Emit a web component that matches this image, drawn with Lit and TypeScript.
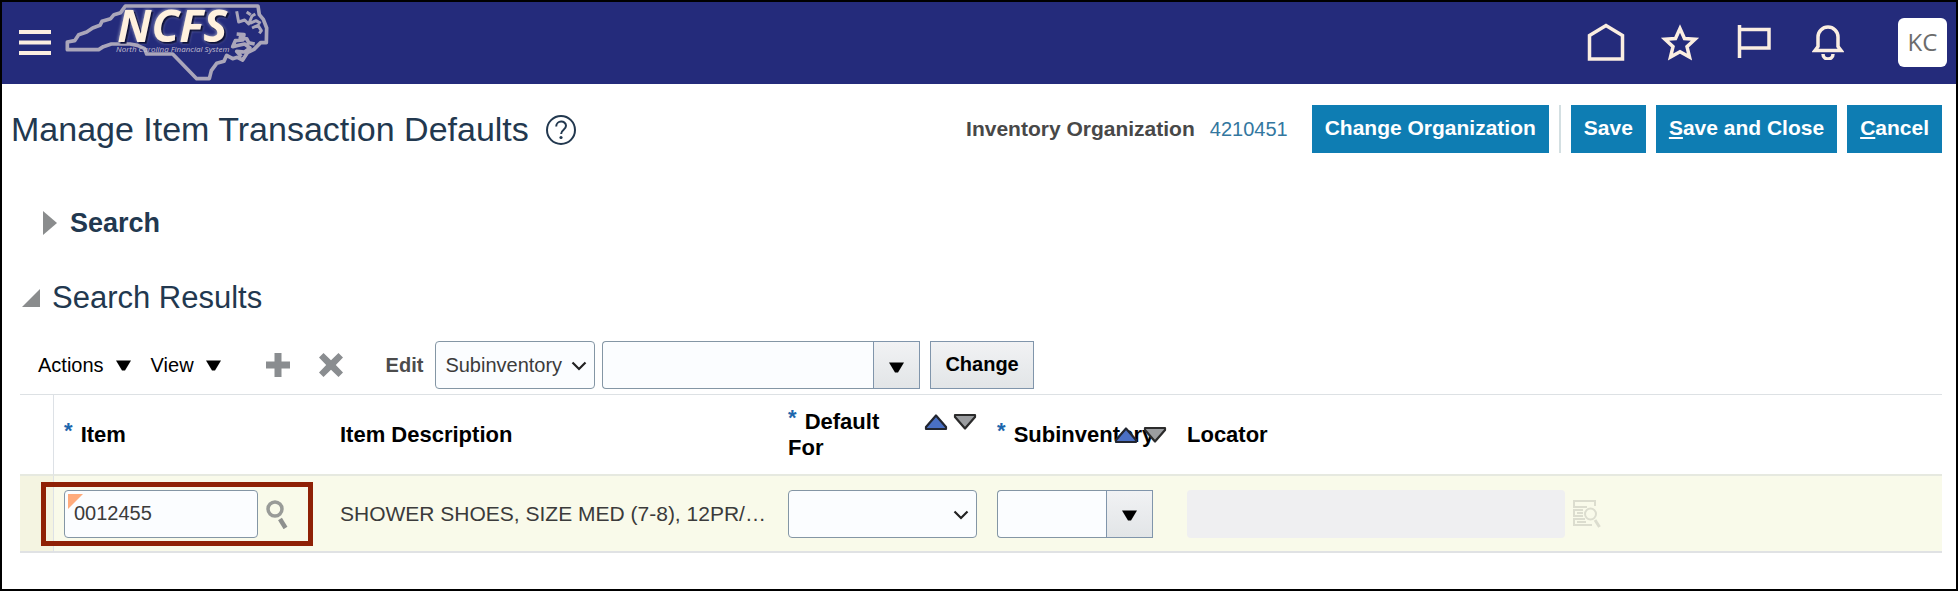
import { LitElement, html, css, svg } from "lit";
import { customElement } from "lit/decorators.js";

const chevron = html`<svg class="chevron" width="16" height="10" viewBox="0 0 16 10" aria-hidden="true">
  <path d="M1.5 1.5 8 8l6.500-6.500" fill="none" stroke="#222" stroke-width="2.200" />
</svg>`;

const downTriangle = html`<svg width="15" height="11" viewBox="0 0 15 11" aria-hidden="true">
  <path d="M0 .5h15L9 10.500H6z" fill="#000" />
</svg>`;

const sortIcons = html`<span class="sort">
  <button class="plain" aria-label="Sort ascending">
    <svg width="24" height="18" viewBox="0 0 24 18">
      <path d="M12 2.500 22 14v2H2v-2z" fill="#4a70c4" stroke="#222630" stroke-width="2.200" stroke-linejoin="round" />
    </svg>
  </button>
  <button class="plain" aria-label="Sort descending">
    <svg width="24" height="18" viewBox="0 0 24 18">
      <path d="M2 2h20v2L12 15.500 2 4z" fill="#9b9da0" stroke="#2b2b2b" stroke-width="2.200" stroke-linejoin="round" />
    </svg>
  </button>
</span>`;

const coastline = svg`
  <g fill="none" stroke="#aaa6ba" stroke-width="11" stroke-linejoin="round">
    <path d="M226 18H624L628 44 640 58 650 84 649 128H632L612 148 592 158 578 180 562 172 548 176 530 166 522 184 500 190 484 212 478 236H440L368 162H290L284 146 262 136 240 132H184L160 140 146 149H52V126L74 122 86 104 110 96 128 84 150 76 156 64 182 56 192 44 212 38Z" />
    <path stroke-width="9" d="M560 34 566 66 584 60 596 72 606 48 616 42M590 36 602 44M606 84 624 76 634 92 628 100M600 70 618 62 632 70" />
    <path stroke-width="11" d="M560 102 582 104 578 120 556 122 548 140 566 136 584 132 600 144 584 156 560 154 574 170M566 110 590 116 596 128 614 132" />
  </g>`;

@customElement("app-root")
export class AppRoot extends LitElement {
  static styles = css`
    :host {
      display: block;
      box-sizing: border-box;
      min-height: 100vh;
      border: 2px solid #000;
      background: #fff;
      color: #000;
      font: 20px/26px "Liberation Sans", Arial, sans-serif;
    }
    * { box-sizing: border-box; }
    svg { display: block; flex: none; }
    h1, h2 { margin: 0; }
    button, input, select { font: inherit; color: inherit; margin: 0; }
    button { cursor: pointer; }
    .plain {
      display: flex;
      align-items: center;
      justify-content: center;
      padding: 0;
      border: 0;
      background: none;
    }
    .top {
      display: flex;
      align-items: center;
      height: 82px;
      padding: 0 9px 0 17px;
      background: #242b7b;
      gap: 14px;
    }
    .shortcuts { display: flex; gap: 26px; margin: 0 0 2px auto; }
    .shortcuts .plain { width: 48px; height: 48px; }
    .avatar {
      width: 49px;
      height: 49px;
      margin: 0 0 2px 32px;
      padding: 0;
      border: 0;
      border-radius: 6px;
      background: #fff;
      color: #6c6c6c;
      font: 24px/48px "Open Sans", "Noto Sans", sans-serif;
    }
    .logo { overflow: visible; }
    .logo-name {
      font: italic bold 136px "Open Sans", sans-serif;
      fill: #fff1de;
      filter: drop-shadow(5px 5px 2px #0d1038) drop-shadow(-2px -2px 4px #8f93b8);
    }
    .logo-sub { font: italic 24px "Open Sans", sans-serif; fill: #c3bfd0; }
    .titlebar {
      display: flex;
      align-items: center;
      padding: 21px 14px 0 9px;
      min-height: 69px;
    }
    .titlebar h1 { font-size: 34px; line-height: 48px; font-weight: 400; color: #22384f; }
    .help { margin-left: 16px; }
    .org { margin-left: auto; display: flex; gap: 15px; }
    .org-label { font-size: 21px; font-weight: 700; color: #484848; }
    .org a { color: #33779f; text-decoration: none; }
    .actions { display: flex; gap: 10px; margin-left: 24px; }
    .primary {
      height: 48px;
      padding: 0 13px 2px;
      border: 0;
      background: #0e7db3;
      color: #fff;
      font-size: 21px;
      font-weight: 700;
      white-space: nowrap;
    }
    .divider { width: 2px; background: #d3dfe2; }
    .disclosure { display: flex; align-items: center; height: 40px; color: #22384f; }
    .search { margin-top: 50px; padding-left: 40px; gap: 12px; }
    .search h2 { font-size: 27px; line-height: 40px; }
    .results { margin-top: 35px; padding-left: 20px; gap: 12px; }
    .results h2 { font-size: 31px; line-height: 40px; font-weight: 400; }
    .toolbar { display: flex; align-items: center; margin-top: 23px; padding-left: 36px; height: 48px; }
    .menu { gap: 12px; margin-right: 20px; }
    .add { margin-left: 25px; }
    .remove { margin-left: 29px; }
    .edit { margin: 0 12px 0 43px; font-weight: 700; color: #4c4c4c; }
    .select { position: relative; display: block; }
    .select select, .field {
      display: block;
      width: 100%;
      height: 48px;
      padding: 0 9px;
      appearance: none;
      border: 1px solid #8496a5;
      border-radius: 4px;
      background: #fbfdff;
      color: #3b3b3b;
    }
    .chevron { position: absolute; right: 8px; top: 20px; pointer-events: none; }
    .kind { width: 160px; margin-right: 7px; }
    .combo { display: flex; align-items: stretch; }
    .combo .field { flex: 1; min-width: 0; border-right: 0; border-radius: 4px 0 0 4px; }
    .combo .plain, .change {
      border: 1px solid #8095ab;
      background: linear-gradient(#f1f2f4, #e2e5e7);
    }
    .combo .plain { width: 47px; padding-top: 4px; }
    .value { width: 318px; margin-right: 10px; }
    .subinv { width: 156px; }
    .change { height: 48px; padding: 0 14px 2px; font-weight: 700; }
    .grid { margin: 5px 14px 0 18px; }
    table { width: 100%; table-layout: fixed; border-collapse: separate; border-spacing: 0; }
    .c-row { width: 34px; }
    .c-item { width: 276px; }
    .c-desc { width: 448px; }
    .c-default { width: 209px; }
    .c-sub { width: 190px; }
    th {
      height: 82px;
      padding: 0 10px;
      border-top: 1px solid #dde1e4;
      border-bottom: 2px solid #e6e9e0;
      font-size: 22px;
      text-align: left;
    }
    td {
      height: 77px;
      padding: 0 10px;
      border-bottom: 2px solid #e0e2e4;
      background: #f9faea;
      color: #3b3b3b;
      font-size: 20px;
    }
    .c-mark { border-right: 1px solid #dde1e6; padding: 0; }
    td.c-mark { background: #f4f4e1; }
    .head { position: relative; }
    .req { color: #1d66ad; vertical-align: 4px; line-height: 0; margin-right: 2px; }
    .sort { position: absolute; right: 0; top: 0; height: 26px; display: flex; align-items: center; gap: 5px; }
    .desc { font-size: 21px; white-space: nowrap; overflow: hidden; }
    .item { position: relative; display: flex; align-items: center; gap: 8px; }
    .item .field { width: 194px; }
    .changed { position: absolute; left: 4px; top: 4px; }
    .callout {
      position: absolute;
      inset: -8px 7px -8px -23px;
      border: 5px solid #8f2106;
      pointer-events: none;
    }
    .locator { display: flex; align-items: center; gap: 8px; }
    .locator .field { width: 378px; border: 0; background: #efeff1; }
  `;

  render() {
    return html`
      <header class="top">
        <button class="plain" aria-label="Navigator">
          <svg width="32" height="26" viewBox="0 0 32 26" fill="#fbeee1">
            <path d="M0 0h32v4H0zM0 10.500h32v4H0zM0 21h32v4H0z" />
          </svg>
        </button>
        <svg class="logo" width="205" height="80" viewBox="45 9 615 240" role="img" aria-label="NCFS">
          ${coastline}
          <text class="logo-name" x="202" y="126">NCFS</text>
          <text class="logo-sub" x="198" y="157">North Carolina Financial System</text>
        </svg>
        <nav class="shortcuts">
          <button class="plain" aria-label="Home">
            <svg width="38" height="40" viewBox="0 0 38 40" fill="none" stroke="#fbeee1" stroke-width="3.500">
              <path d="M2.500 37V13.500L19 3.500l16.500 10V37z" />
            </svg>
          </button>
          <button class="plain" aria-label="Favorites">
            <svg width="40" height="40" viewBox="0 0 40 40" fill="none" stroke="#fbeee1" stroke-width="3.500">
              <path d="M20 6.500 24.500 16.500 35 17.200 27 24.600 29.500 35 20 29.800 10.500 35 13 24.600 5 17.200 15.500 16.500z" />
            </svg>
          </button>
          <button class="plain" aria-label="Watchlist">
            <svg width="36" height="36" viewBox="0 0 36 36" fill="none" stroke="#fbeee1" stroke-width="3.500">
              <path d="M3.500 1v33M3.500 5.500h29.500V24H3.500" />
            </svg>
          </button>
          <button class="plain" aria-label="Notifications">
            <svg width="32" height="36" viewBox="0 0 32 36" fill="none" stroke="#fbeee1" stroke-width="3.500">
              <path d="M3 26.500 6 22.500V13a10 10 0 0 1 20 0v9.500l3 4z" />
              <path d="M11 30a5 5 0 0 0 10 0" />
            </svg>
          </button>
        </nav>
        <button class="avatar">KC</button>
      </header>

      <main>
        <div class="titlebar">
          <h1>Manage Item Transaction Defaults</h1>
          <button class="plain help" aria-label="Help">
            <svg width="32" height="32" viewBox="0 0 32 32" fill="none" stroke="#22384f">
              <circle cx="16" cy="17" r="14" stroke-width="2" />
              <path d="M11.200 13.500c0-6.400 9.800-6.400 9.800-.7 0 4-4.900 3.800-4.900 8.200" stroke-width="2" />
              <circle cx="16" cy="24.500" r="1.600" fill="#22384f" stroke="none" />
            </svg>
          </button>
          <div class="org">
            <span class="org-label">Inventory Organization</span>
            <a href="#">4210451</a>
          </div>
          <div class="actions">
            <button class="primary">Change Organization</button>
            <span class="divider"></span>
            <button class="primary">Save</button>
            <button class="primary"><u>S</u>ave and Close</button>
            <button class="primary"><u>C</u>ancel</button>
          </div>
        </div>

        <div class="disclosure search">
          <button class="plain" aria-label="Expand Search">
            <svg width="16" height="24" viewBox="0 0 16 24"><path d="M1 0v24L15 12z" fill="#8a8c8d" /></svg>
          </button>
          <h2>Search</h2>
        </div>

        <div class="disclosure results">
          <button class="plain" aria-label="Collapse Search Results">
            <svg width="18" height="18" viewBox="0 0 18 18"><path d="M18 0v18H0z" fill="#8a8c8d" /></svg>
          </button>
          <h2>Search Results</h2>
        </div>

        <div class="toolbar">
          <button class="plain menu">Actions ${downTriangle}</button>
          <button class="plain menu">View ${downTriangle}</button>
          <button class="plain add" aria-label="Add Row">
            <svg width="24" height="24" viewBox="0 0 24 24"><path d="M8.500 0h7v8.500H24v7h-8.500V24h-7v-8.500H0v-7h8.500z" fill="#8a8d90" /></svg>
          </button>
          <button class="plain remove" aria-label="Delete">
            <svg width="24" height="24" viewBox="0 0 24 24"><path d="m4.500 0 7.500 7.200L19.500 0 24 4.500 16.800 12l7.200 7.500-4.500 4.500-7.500-7.200L4.500 24 0 19.500 7.200 12 0 4.500z" fill="#8a8d90" /></svg>
          </button>
          <label class="edit" for="kind">Edit</label>
          <span class="select kind">
            <select id="kind"><option>Subinventory</option></select>
            ${chevron}
          </span>
          <span class="combo value">
            <input class="field" aria-label="Subinventory value" />
            <button class="plain" aria-label="Show values">${downTriangle}</button>
          </span>
          <button class="change">Change</button>
        </div>

        <div class="grid">
          <table>
            <colgroup>
              <col class="c-row" /><col class="c-item" /><col class="c-desc" />
              <col class="c-default" /><col class="c-sub" /><col />
            </colgroup>
            <thead>
              <tr>
                <th class="c-mark"></th>
                <th><span class="req">*</span> Item</th>
                <th>Item Description</th>
                <th><div class="head"><span class="req">*</span> Default<br />For ${sortIcons}</div></th>
                <th><div class="head"><span class="req">*</span> Subinventory${sortIcons}</div></th>
                <th>Locator</th>
              </tr>
            </thead>
            <tbody>
              <tr>
                <td class="c-mark"></td>
                <td>
                  <div class="item">
                    <input class="field" aria-label="Item" .value=${"0012455"} />
                    <svg class="changed" width="15" height="15" viewBox="0 0 15 15"><path d="M0 0h15L0 15z" fill="#ffab7c" /></svg>
                    <button class="plain" aria-label="Search: Item">
                      <svg width="22" height="30" viewBox="0 0 22 30" fill="none">
                        <circle cx="9" cy="10" r="7" stroke="#999b98" stroke-width="3.500" />
                        <path d="m14 20 5.500 9" stroke="#8e908e" stroke-width="4.500" />
                      </svg>
                    </button>
                    <span class="callout"></span>
                  </div>
                </td>
                <td><div class="desc">SHOWER SHOES, SIZE MED (7-8), 12PR/…</div></td>
                <td>
                  <span class="select">
                    <select aria-label="Default For"><option></option></select>
                    ${chevron}
                  </span>
                </td>
                <td>
                  <span class="combo subinv">
                    <input class="field" aria-label="Subinventory" />
                    <button class="plain" aria-label="Show subinventories">${downTriangle}</button>
                  </span>
                </td>
                <td>
                  <div class="locator">
                    <input class="field" aria-label="Locator" disabled />
                    <button class="plain" aria-label="Search: Locator" disabled>
                      <svg width="28" height="28" viewBox="0 0 28 28" fill="none" stroke="#dcddcf" stroke-width="2">
                        <path d="M22 6V1H1v6h13M10 10H1v6h9M10 13H4M12 19H1v6h18M4 22h9" />
                        <circle cx="17.500" cy="14" r="5.500" />
                        <path d="m22 20 4.500 7" stroke-width="3" />
                      </svg>
                    </button>
                  </div>
                </td>
              </tr>
            </tbody>
          </table>
        </div>
      </main>
    `;
  }
}
